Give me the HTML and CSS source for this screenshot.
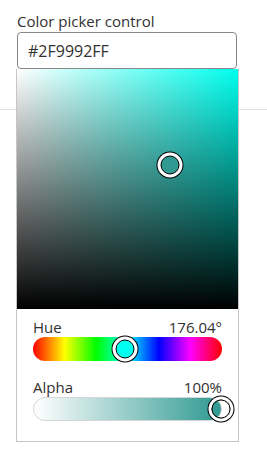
FILE: index.html
```
<html>
    <head>
        <meta charset="utf-8">
        <meta name="viewport" content="width=device-width, initial-scale=1">
        <title>Color picker</title>
        <link rel="stylesheet" href="styles.css">
    </head>
    <body>
        <div class="field">
            <label class="field-label" for="color">Color picker control</label>
            <div class="picker">
                <input class="color-input" id="color" type="text" value="#2F9992FF" />
                <div class="popup">
                    <div class="sv-area">
                        <span class="thumb sv-thumb"></span>
                    </div>
                    <div class="sliders">
                        <div class="slider-head"><span>Hue</span><span>176.04°</span></div>
                        <div class="bar hue-bar">
                            <span class="thumb hue-thumb" style="left:48.9%"></span>
                        </div>
                        <div class="slider-head"><span>Alpha</span><span>100%</span></div>
                        <div class="bar alpha-bar">
                            <span class="thumb alpha-thumb" style="left:100%"></span>
                        </div>
                    </div>
                </div>
            </div>
        </div>
        <div class="divider"></div>
    </body>
</html>
```
FILE: styles.css
```
body {
    margin: 0;
    background: #fff;
    color: #323130;
    font-family: "Open Sans", "Noto Sans", sans-serif;
}
.field {
    padding: 10px 16px 0 17px;
}
.field-label {
    display: block;
    font-size: 15px;
    line-height: 22px;
}
.picker {
    position: relative;
    width: 220px;
}
.color-input {
    box-sizing: border-box;
    width: 220px;
    height: 37px;
    padding: 0 10px;
    border: 1px solid #8a8886;
    border-radius: 4px;
    font-family: inherit;
    font-size: 16px;
    color: #323130;
    outline: none;
}
.divider {
    margin-top: 40px;
    height: 1px;
    background: #e1dfdd;
}

/* dropdown panel */
.popup {
    position: absolute;
    left: -1px;
    top: 100%;
    width: 221px;
    border: 1px solid #c8c6c4;
    border-top: none;
    background: #fff;
    z-index: 2;
}
.sv-area {
    position: relative;
    height: 240px;
    background:
        linear-gradient(to top, #000, rgba(0,0,0,0)),
        linear-gradient(to right, #fff, #00ffee);
}
.sliders {
    padding: 8px 16px 20px;
}
.slider-head {
    display: flex;
    justify-content: space-between;
    font-size: 15px;
    line-height: 20px;
}
.bar {
    position: relative;
    box-sizing: border-box;
    height: 24px;
    border-radius: 12px;
    margin-bottom: 16px;
}
.bar:last-child {
    margin-bottom: 0;
}
.hue-bar {
    background: linear-gradient(to right, #f00, #ff0 16.7%, #0f0 33.3%, #0ff 50%, #00f 66.7%, #f0f 83.3%, #f00);
}
.alpha-bar {
    border: 1px solid #d6d6d6;
    background: linear-gradient(to right, rgba(47,153,146,0), #2f9992);
}
.thumb {
    position: absolute;
    top: 50%;
    width: 17px;
    height: 17px;
    border: 1px solid #000;
    border-radius: 50%;
    transform: translate(-50%, -50%);
    box-shadow: 0 0 0 3px #fff, 0 0 0 4px #000;
}
.sv-thumb {
    left: 69.2%;
    top: 40%;
    background: #2f9992;
}
.hue-thumb {
    background: #00ffee;
}
.alpha-thumb {
    background: transparent;
}
```
